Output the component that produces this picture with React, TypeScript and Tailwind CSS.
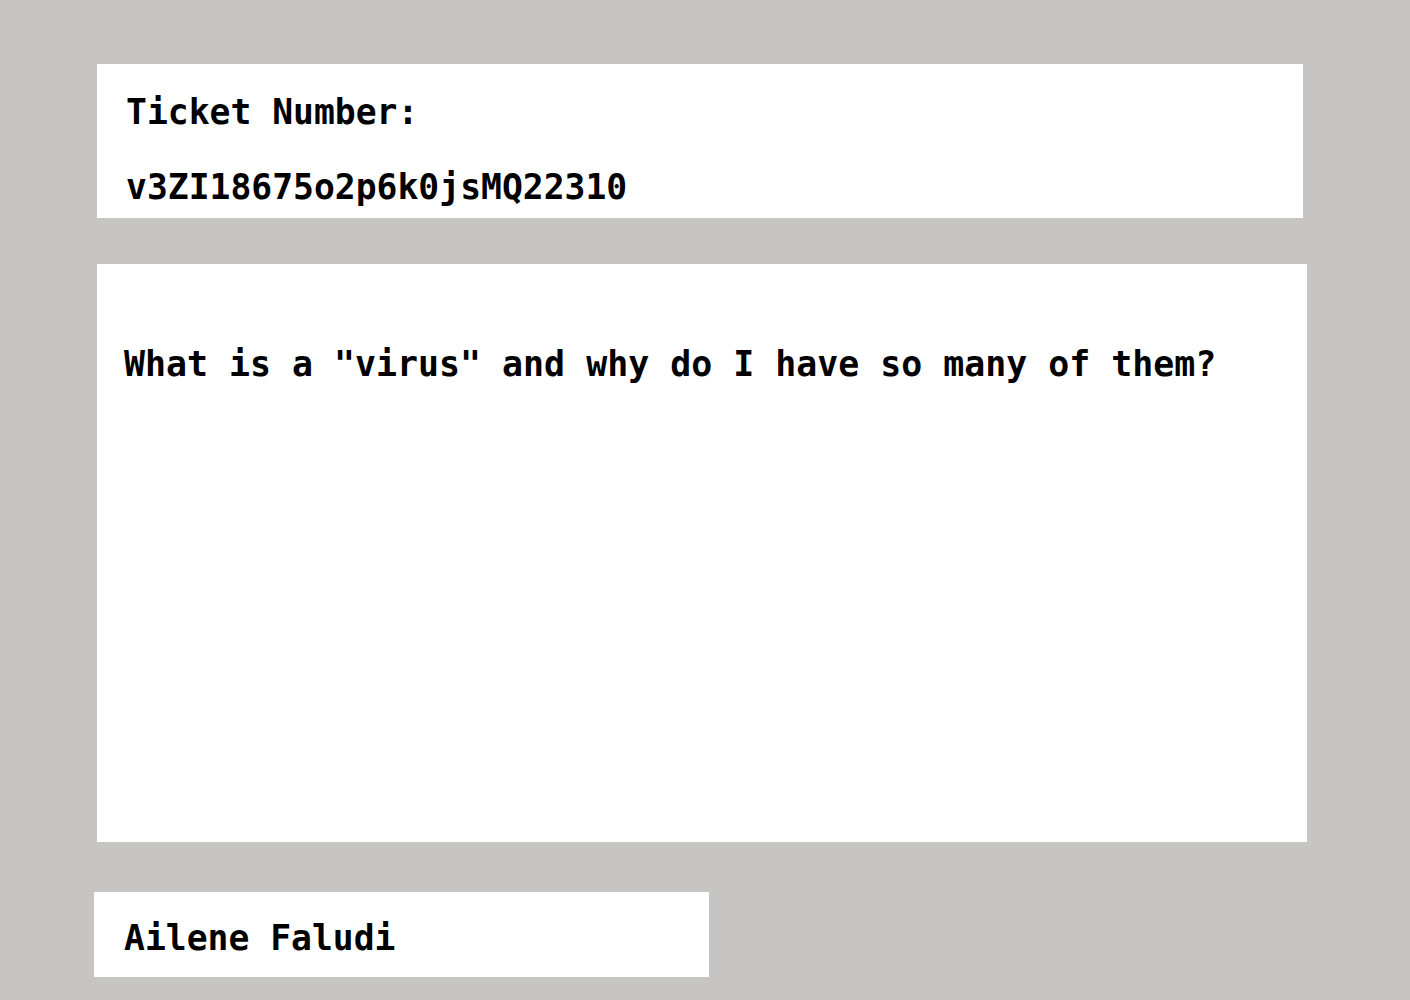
import React from "react";

export default function App() {
  const font = { fontFamily: '"DejaVu Sans Mono", "Liberation Mono", monospace' };
  return (
    <div className="min-h-screen w-full bg-[#c6c5c3] pt-[64px]" style={font}>
      <div className="ml-[97px] w-[1206px] h-[154px] bg-white pl-[29px] pt-[28px] flex flex-col gap-[35px] text-[34.7px] leading-[40px] font-bold text-black">
        <div>Ticket Number:</div>
        <div>v3ZI18675o2p6k0jsMQ22310</div>
      </div>
      <div className="ml-[97px] mt-[46px] w-[1210px] h-[578px] bg-white pl-[27px] pt-[80px] text-[34.9px] leading-[40px] font-bold text-black whitespace-pre">
        What is a "virus" and why do I have so many of them?
      </div>
      <div className="ml-[94px] mt-[50px] w-[615px] h-[85px] bg-white pl-[30px] pt-[26px] text-[34.7px] leading-[40px] font-bold text-black">
        Ailene Faludi
      </div>
    </div>
  );
}
